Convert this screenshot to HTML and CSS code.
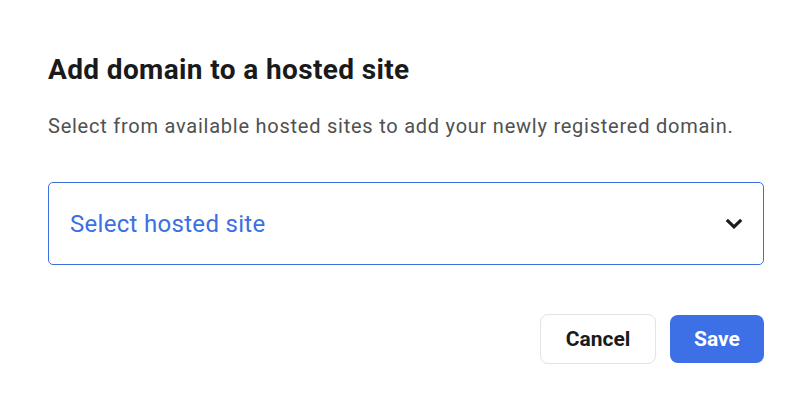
FILE: index.html
```html
<!DOCTYPE html>
<html lang="en">
<head>
<meta charset="utf-8">
<title>Add domain to a hosted site</title>
<link rel="stylesheet" href="styles.css">
</head>
<body>
<div class="dialog">
  <h1 class="title">Add domain to a hosted site</h1>
  <p class="subtitle">Select from available hosted sites to add your newly registered domain.</p>
  <div class="select">
    <span class="placeholder">Select hosted site</span>
    <svg class="chevron" width="18" height="11" viewBox="0 0 18 11" aria-hidden="true">
      <polyline points="1.8,1.8 9,8.8 16.2,1.8" fill="none" stroke="#1c1c1c" stroke-width="3.2"/>
    </svg>
  </div>
  <div class="actions">
    <button class="btn btn-cancel">Cancel</button>
    <button class="btn btn-save">Save</button>
  </div>
</div>
</body>
</html>
```

FILE: styles.css
```css
html, body {
  margin: 0;
  background: #ffffff;
}
body {
  font-family: Roboto, "Liberation Sans", sans-serif;
}
.dialog {
  padding: 53px 44px 0 48px;
  display: flex;
  flex-direction: column;
}
.title {
  margin: 0;
  font-size: 28px;
  line-height: 34px;
  font-weight: 700;
  letter-spacing: 0.37px;
  color: #1a1a1a;
}
.subtitle {
  margin: 27px 0 0;
  font-size: 20px;
  line-height: 24px;
  letter-spacing: 0.76px;
  color: #505050;
}
.select {
  margin-top: 44px;
  height: 83px;
  box-sizing: border-box;
  border: 1px solid #3b6fe3;
  border-radius: 5px;
  display: flex;
  align-items: center;
  justify-content: space-between;
  padding: 0 20px 0 21px;
}
.placeholder {
  font-size: 24px;
  letter-spacing: 0.3px;
  color: #3b6fe3;
}
.chevron {
  display: block;
}
.actions {
  margin-top: 49px;
  display: flex;
  justify-content: flex-end;
  align-items: center;
  gap: 14px;
}
.btn {
  font-family: Roboto, "Liberation Sans", sans-serif;
  font-size: 21px;
  font-weight: 700;
  border-radius: 8px;
  box-sizing: border-box;
  cursor: pointer;
}
.btn-cancel {
  height: 50px;
  width: 116px;
  background: #ffffff;
  border: 1px solid #e3e3e3;
  color: #1a1a1a;
}
.btn-save {
  height: 48px;
  width: 94px;
  background: #3d6fe6;
  border: none;
  color: #ffffff;
}
```
